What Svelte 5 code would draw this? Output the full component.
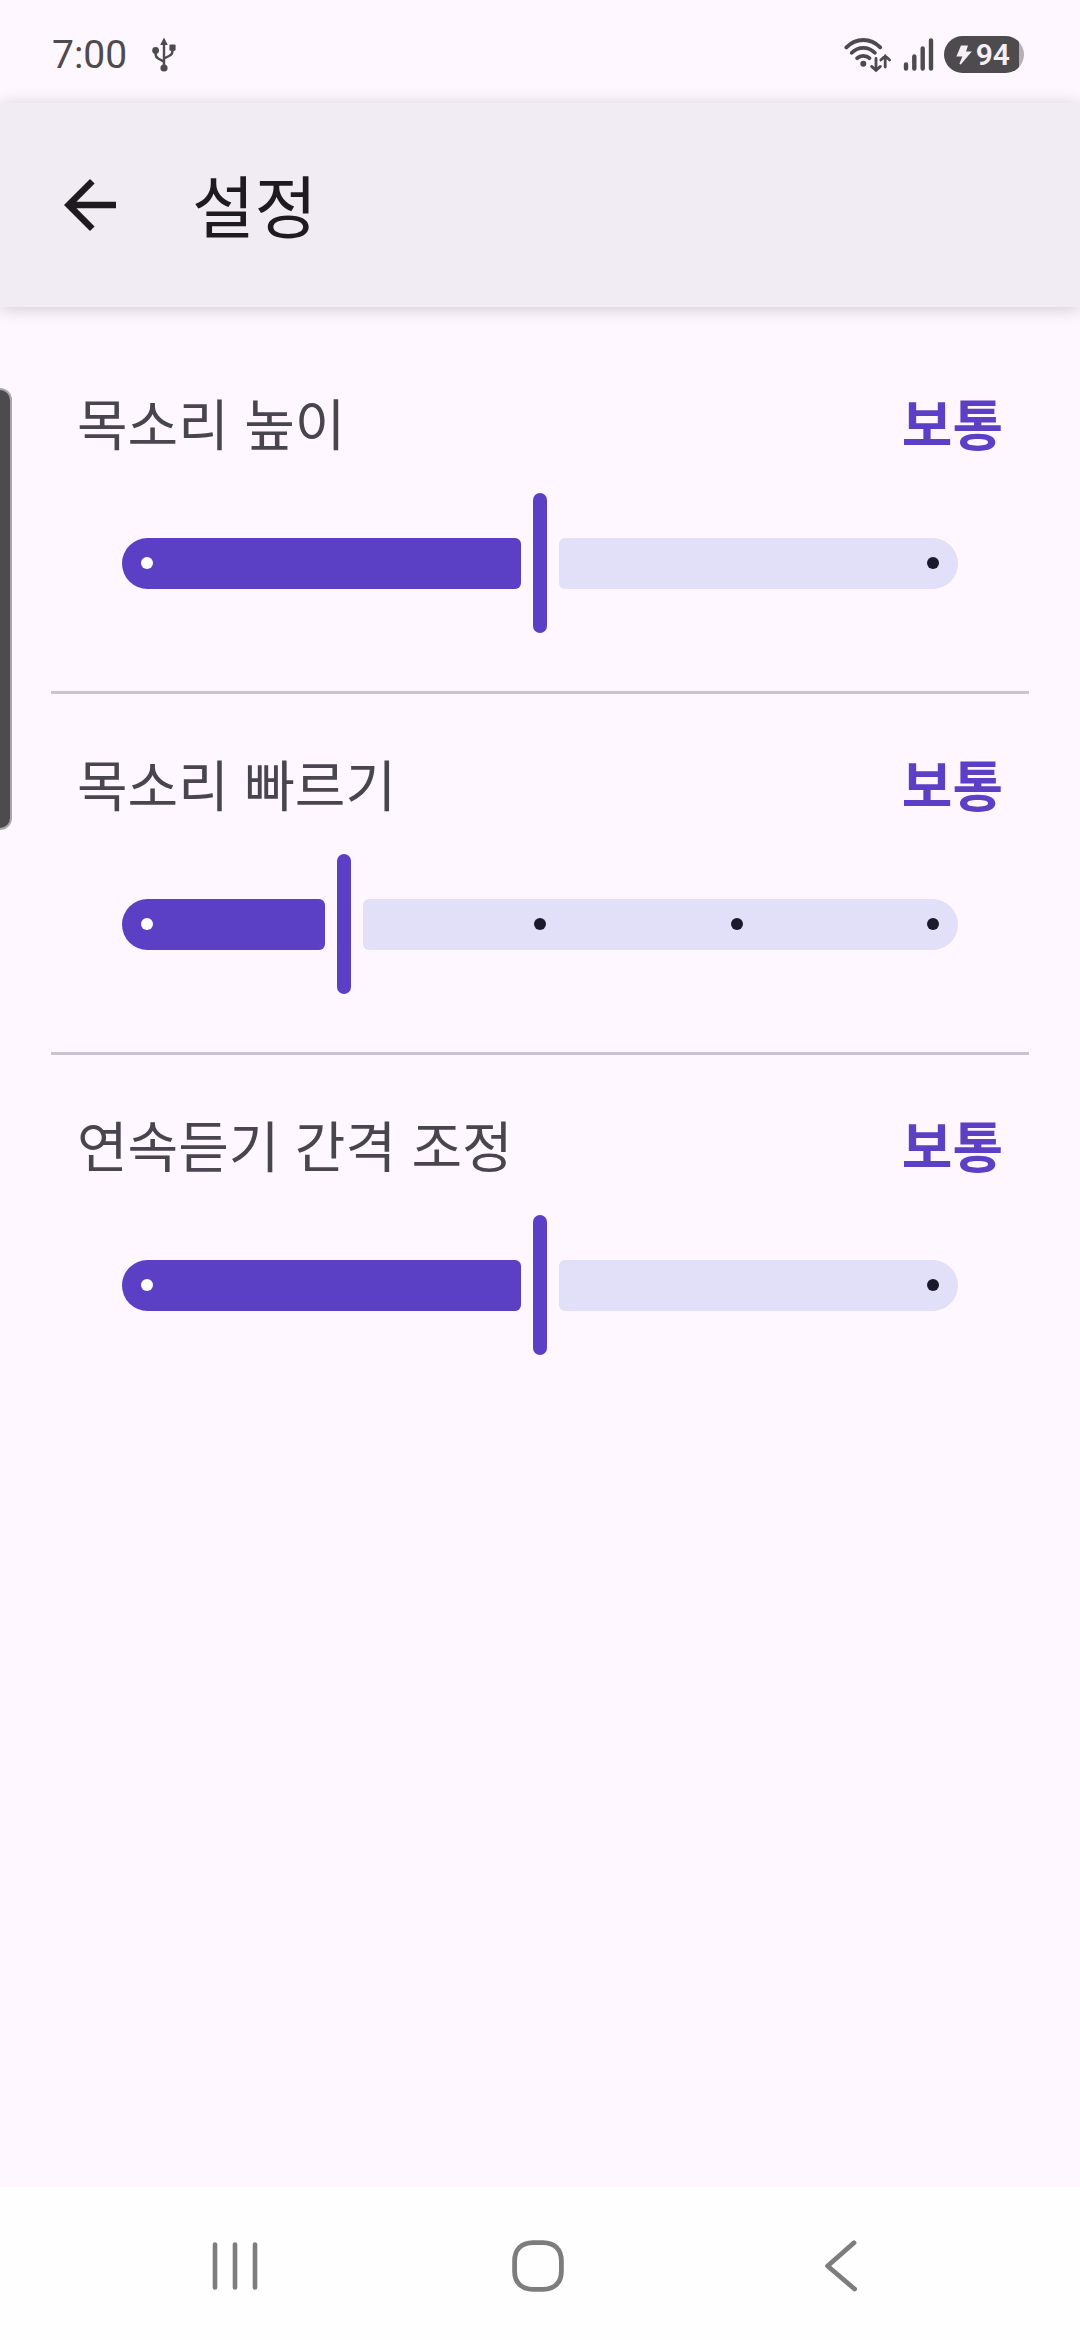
<script lang="ts">
	let sliders = [
		{ id: 'pitch', name: '목소리 높이', label: '보통', max: 2, value: 1 },
		{ id: 'speed', name: '목소리 빠르기', label: '보통', max: 4, value: 1 },
		{ id: 'interval', name: '연속듣기 간격 조정', label: '보통', max: 2, value: 1 }
	];

	function steps(max: number) {
		return Array.from({ length: max + 1 }, (_, i) => i);
	}
</script>

<div class="screen" lang="ko">
	<div class="status-bar">
		<span class="time">7:00</span>
		<svg class="usb" width="24" height="36" viewBox="0 0 24 36" fill="#4d4b4e">
			<path d="M12 0.5 L15.8 8 H8.2 Z" />
			<circle cx="12" cy="31" r="3.6" />
			<circle cx="3.6" cy="13.5" r="3.4" />
			<rect x="17.4" y="7.6" width="6.2" height="6.2" rx="1" />
			<path
				d="M12 6 V30 M3.6 14 V17 Q3.6 20.5 7 22 L12 24.6 M20.4 12 V14.5 Q20.4 17.5 17 19 L12 21.5"
				fill="none"
				stroke="#4d4b4e"
				stroke-width="2.4"
			/>
		</svg>
		<div class="indicators">
			<svg width="48" height="36" viewBox="0 0 48 36" fill="none" stroke="#4d4b4e" stroke-linecap="round">
				<path
					d="M2.4 10.4 Q9.5 3 19.3 3 T36.2 10.4 M7.8 15.8 Q12.5 10.8 19.3 10.8 T30.8 15.8 M13.2 21.2 Q15.6 18.8 19.3 18.8 T25.4 21.2"
					stroke-width="3.8"
				/>
				<circle cx="19.3" cy="26.8" r="3" fill="#4d4b4e" stroke="none" />
				<path
					d="M32 21.5 V33 M27.6 29.4 L32 33.4 L36.4 29.4 M41.2 30 V19 M36.8 23 L41.2 19 L45.6 23"
					stroke-width="2.8"
				/>
			</svg>
			<svg width="32" height="36" viewBox="0 0 32 36" stroke="#4d4b4e" stroke-width="4.4" stroke-linecap="round">
				<path d="M4 27.5 V31.5 M12.3 19.5 V31.5 M20.7 11.5 V31.5 M29 3.5 V31.5" />
			</svg>
			<div class="battery">
				<svg width="16" height="20" viewBox="0 0 16 20" fill="#f6eff8">
					<path d="M5 0.5 H12 L10 6.4 H15.8 L4.8 19.4 L3.4 18.8 L6.4 11.4 H0.4 Z" />
				</svg>
				<span>94</span>
			</div>
		</div>
	</div>

	<header>
		<button class="back" aria-label="뒤로">
			<svg width="78" height="78" viewBox="0 0 24 24" fill="#1d1b20">
				<path d="M20 11H7.83l5.59-5.59L12 4l-8 8 8 8 1.41-1.41L7.83 13H20v-2z" />
			</svg>
		</button>
		<h1>설정</h1>
	</header>

	<main>
		{#each sliders as slider}
			<section>
				<div class="row">
					<label for={slider.id}>{slider.name}</label>
					<output for={slider.id}>{slider.label}</output>
				</div>
				<div class="slider" style="--part: {slider.value / slider.max}">
					<div class="track">
						<span class="active"></span>
						<span class="thumb"></span>
						<span class="inactive"></span>
					</div>
					<div class="ticks">
						{#each steps(slider.max) as step}
							<span
								class="tick"
								class:filled={step < slider.value}
								class:current={step === slider.value}
							></span>
						{/each}
					</div>
					<input id={slider.id} type="range" min="0" max={slider.max} step="1" bind:value={slider.value} />
				</div>
			</section>
		{/each}
	</main>

	<nav>
		<button aria-label="최근 앱">
			<svg width="54" height="54" viewBox="0 0 54 54" stroke="#7d7d7d" stroke-width="4.6" stroke-linecap="round">
				<path d="M7 5.5 V48.5 M27 5.5 V48.5 M47 5.5 V48.5" />
			</svg>
		</button>
		<button aria-label="홈">
			<svg width="54" height="54" viewBox="0 0 54 54" fill="none" stroke="#7d7d7d" stroke-width="4.8">
				<path
					d="M22 3.6 H32 C44 4 50.4 10.5 50.4 22 V32 C50.4 43.5 44 50 32 50.4 H22 C10 50 3.6 43.5 3.6 32 V22 C3.6 10.5 10 4 22 3.6 Z"
				/>
			</svg>
		</button>
		<button aria-label="뒤로 가기">
			<svg
				width="54"
				height="54"
				viewBox="0 0 54 54"
				fill="none"
				stroke="#7d7d7d"
				stroke-width="4.8"
				stroke-linecap="round"
				stroke-linejoin="round"
			>
				<path d="M40 3.8 L13.6 27 L40.6 50" />
			</svg>
		</button>
	</nav>

	<!-- edge panel handle -->
	<div class="edge-handle"></div>
</div>

<style>
	:global(body) {
		margin: 0;
		background-color: #fef7ff;
	}
	.screen {
		position: relative;
		display: flex;
		flex-direction: column;
		min-height: 100vh;
		background-color: #fef7ff;
		font-family: 'Noto Sans CJK KR', sans-serif;
	}
	button {
		display: flex;
		align-items: center;
		justify-content: center;
		padding: 0;
		border: none;
		background: none;
		cursor: pointer;
	}
	svg {
		display: block;
	}

	.status-bar {
		display: flex;
		align-items: center;
		height: 103px;
		padding: 6px 56px 0 52px;
		box-sizing: border-box;
		color: #4d4b4e;
		font-family: Roboto, sans-serif;
	}
	.time {
		font-size: 39px;
		line-height: 48px;
	}
	.usb {
		margin-left: 25px;
	}
	.indicators {
		display: flex;
		align-items: center;
		gap: 10px;
		margin-left: auto;
	}
	.battery {
		display: flex;
		align-items: center;
		gap: 4px;
		height: 37px;
		padding: 0 14px 0 12px;
		border-radius: 19px;
		background: linear-gradient(to right, #4d4b4e 94%, #b5b0b7 94%);
		color: #f6eff8;
		font-size: 30px;
		font-weight: 600;
		line-height: 38px;
	}

	header {
		display: flex;
		align-items: center;
		gap: 63px;
		height: 204px;
		padding: 0 51px;
		background-color: #f1ecf3;
		box-shadow: 0 2px 16px rgba(0, 0, 0, 0.18);
	}
	h1 {
		margin: 0 0 2px;
		color: #1d1b20;
		font-size: 68px;
		font-weight: 400;
		line-height: 96px;
	}

	main {
		flex: 1;
		padding: 26px 51px;
	}
	section {
		padding: 48px 0 58px;
		border-bottom: 3px solid #cac4d0;
	}
	section:last-child {
		border-bottom: none;
	}
	.row {
		display: flex;
		justify-content: space-between;
		padding: 0 26px;
		margin-bottom: 32px;
		font-size: 55px;
		line-height: 80px;
	}
	label {
		color: #49454f;
	}
	output {
		color: #5b3fc5;
		font-weight: 700;
	}

	.slider {
		display: grid;
		height: 140px;
		margin: 0 71px;
	}
	.track,
	.ticks,
	.slider input {
		grid-area: 1 / 1;
		min-width: 0;
	}
	.track {
		display: flex;
		align-items: center;
		gap: 12px;
	}
	.active {
		width: calc((100% - 50px) * var(--part) + 6px);
		height: 51px;
		border-radius: 26px 6px 6px 26px;
		background-color: #5b3fc5;
	}
	.thumb {
		width: 14px;
		height: 140px;
		border-radius: 7px;
		background-color: #5b3fc5;
	}
	.inactive {
		flex: 1;
		height: 51px;
		border-radius: 6px 26px 26px 6px;
		background-color: #e2dff8;
	}
	.ticks {
		display: flex;
		align-items: center;
		justify-content: space-between;
		padding: 0 19px;
	}
	.tick {
		width: 12px;
		height: 12px;
		border-radius: 50%;
		background-color: #1b192c;
	}
	.tick.filled {
		background-color: #ffffff;
	}
	.tick.current {
		visibility: hidden;
	}
	.slider input {
		width: 100%;
		height: 100%;
		margin: 0;
		opacity: 0;
		cursor: pointer;
	}

	nav {
		display: grid;
		grid-template-columns: repeat(3, 1fr);
		height: 153px;
		padding: 4px 88px 0 84px;
		box-sizing: border-box;
		background-color: #fefefe;
	}

	.edge-handle {
		position: absolute;
		top: 388px;
		left: 0;
		width: 10px;
		height: 438px;
		border: 2px solid #aaa6ab;
		border-left: none;
		border-radius: 0 13px 13px 0;
		background-color: #4d4b4e;
	}
</style>
